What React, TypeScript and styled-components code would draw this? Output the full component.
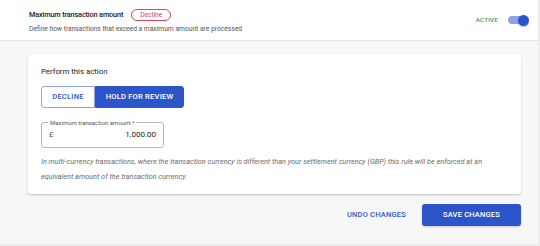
import styled, { createGlobalStyle } from "styled-components";

const GlobalStyle = createGlobalStyle`
  html, body {
    margin: 0;
    padding: 0;
    background: #ffffff;
  }
  * {
    box-sizing: border-box;
  }
  body {
    font-family: Roboto, "Noto Sans", Arial, sans-serif;
  }
`;

const colors = {
  blue: "#2c55c9",
  blueLight: "#8ea4e6",
  text: "#222222",
  muted: "#555555",
  italic: "#6b6b6b",
  red: "#e0405a",
  green: "#3a9a6a",
  page: "#f7f7f7",
  border: "#e6e6e6",
};

const Page = styled("div")`
  width: 540px;
  height: 246px;
  background: ${colors.page};
  border-right: 2px solid #ececec;
  border-bottom: 2px solid #ececec;
  overflow: hidden;
`;

const Header = styled("header")`
  height: 41px;
  background: #ffffff;
  border-bottom: 1px solid ${colors.border};
  display: flex;
  align-items: center;
  justify-content: space-between;
  padding: 0 11px 0 29px;
`;

const HeaderText = styled("div")`
  display: flex;
  flex-direction: column;
  gap: 4px;
  margin-top: 1px;
`;

const TitleRow = styled("div")`
  display: flex;
  align-items: center;
  gap: 8px;
`;

const Title = styled("span")`
  font-size: 7.3px;
  font-weight: 500;
  letter-spacing: -0.15px;
  color: ${colors.text};
`;

const Badge = styled("span")`
  height: 12px;
  padding: 0 8px;
  border: 1px solid ${colors.red};
  border-radius: 7px;
  color: ${colors.red};
  font-size: 6.8px;
  display: inline-flex;
  align-items: center;
`;

const Subtitle = styled("span")`
  font-size: 6.7px;
  color: ${colors.muted};
`;

const Status = styled("div")`
  display: flex;
  align-items: center;
  gap: 10px;
`;

const StatusLabel = styled("span")`
  font-size: 6.2px;
  font-weight: 500;
  letter-spacing: 0.2px;
  color: ${colors.green};
`;

const Toggle = styled("div")`
  position: relative;
  width: 19px;
  height: 8px;
  border-radius: 4px;
  background: ${colors.blueLight};
`;

const Thumb = styled("span")`
  position: absolute;
  right: -2px;
  top: -1.5px;
  width: 11px;
  height: 11px;
  border-radius: 50%;
  background: ${colors.blue};
  box-shadow: 0 1px 2px rgba(0, 0, 0, 0.25);
`;

const Body = styled("main")`
  padding: 13px 17px 0 28px;
`;

const Card = styled("section")`
  background: #ffffff;
  border-radius: 3px;
  box-shadow: 0 1px 2px rgba(0, 0, 0, 0.22);
  padding: 12px 13px 10px 13px;
`;

const SectionLabel = styled("div")`
  font-size: 7.8px;
  color: ${colors.text};
  line-height: 12px;
  margin-bottom: 6px;
`;

const ButtonGroup = styled("div")`
  display: inline-flex;
  height: 22px;
`;

const GroupButton = styled("button")<{ $active?: boolean }>`
  font-family: inherit;
  font-size: 7.6px;
  font-weight: 500;
  letter-spacing: 0.2px;
  text-transform: uppercase;
  height: 100%;
  padding: 0;
  border: 1px solid ${(p) => (p.$active ? colors.blue : colors.blueLight)};
  border-radius: ${(p) => (p.$active ? "0 3px 3px 0" : "3px 0 0 3px")};
  background: ${(p) => (p.$active ? colors.blue : "#ffffff")};
  color: ${(p) => (p.$active ? "#ffffff" : colors.blue)};
  width: ${(p) => (p.$active ? "89px" : "54px")};
`;

const Field = styled("fieldset")`
  margin: 11px 0 0 0;
  width: 123px;
  height: 29px;
  padding: 0 7px;
  border: 1px solid #b8b8b8;
  border-radius: 3px;
  display: flex;
  align-items: center;
  justify-content: space-between;
`;

const FieldLegend = styled("legend")`
  font-size: 6px;
  color: #555555;
  padding: 0 2px;
  margin-left: -1px;
  line-height: 7px;
`;

const Currency = styled("span")`
  font-size: 8px;
  color: #555555;
  margin-top: -3px;
`;

const Amount = styled("span")`
  font-size: 8px;
  color: ${colors.text};
  margin-top: -3px;
`;

const Note = styled("p")`
  margin: 6px 0 0 0;
  font-size: 7.3px;
  font-style: italic;
  line-height: 15px;
  color: ${colors.italic};
`;

const Actions = styled("div")`
  display: flex;
  justify-content: flex-end;
  align-items: center;
  gap: 16px;
  margin-top: 10px;
`;

const TextButton = styled("button")`
  font-family: inherit;
  font-size: 7.5px;
  font-weight: 500;
  letter-spacing: 0.2px;
  color: ${colors.blue};
  background: none;
  border: none;
  padding: 0;
`;

const PrimaryButton = styled("button")`
  font-family: inherit;
  font-size: 7.5px;
  font-weight: 500;
  letter-spacing: 0.2px;
  color: #ffffff;
  background: ${colors.blue};
  border: none;
  border-radius: 3px;
  width: 99px;
  height: 22px;
  box-shadow: 0 1px 2px rgba(0, 0, 0, 0.2);
`;

export default function App() {
  return (
    <>
      <GlobalStyle />
      <Page>
        <Header>
          <HeaderText>
            <TitleRow>
              <Title>Maximum transaction amount</Title>
              <Badge>Decline</Badge>
            </TitleRow>
            <Subtitle>
              Define how transactions that exceed a maximum amount are processed
            </Subtitle>
          </HeaderText>
          <Status>
            <StatusLabel>ACTIVE</StatusLabel>
            <Toggle>
              <Thumb />
            </Toggle>
          </Status>
        </Header>
        <Body>
          <Card>
            <SectionLabel>Perform this action</SectionLabel>
            <ButtonGroup>
              <GroupButton>Decline</GroupButton>
              <GroupButton $active>Hold for review</GroupButton>
            </ButtonGroup>
            <Field>
              <FieldLegend>Maximum transaction amount *</FieldLegend>
              <Currency>£</Currency>
              <Amount>1,000.00</Amount>
            </Field>
            <Note>
              In multi-currency transactions, where the transaction currency is
              different than your settlement currency (GBP) this rule will be
              enforced at an equivalent amount of the transaction currency.
            </Note>
          </Card>
          <Actions>
            <TextButton>UNDO CHANGES</TextButton>
            <PrimaryButton>SAVE CHANGES</PrimaryButton>
          </Actions>
        </Body>
      </Page>
    </>
  );
}
